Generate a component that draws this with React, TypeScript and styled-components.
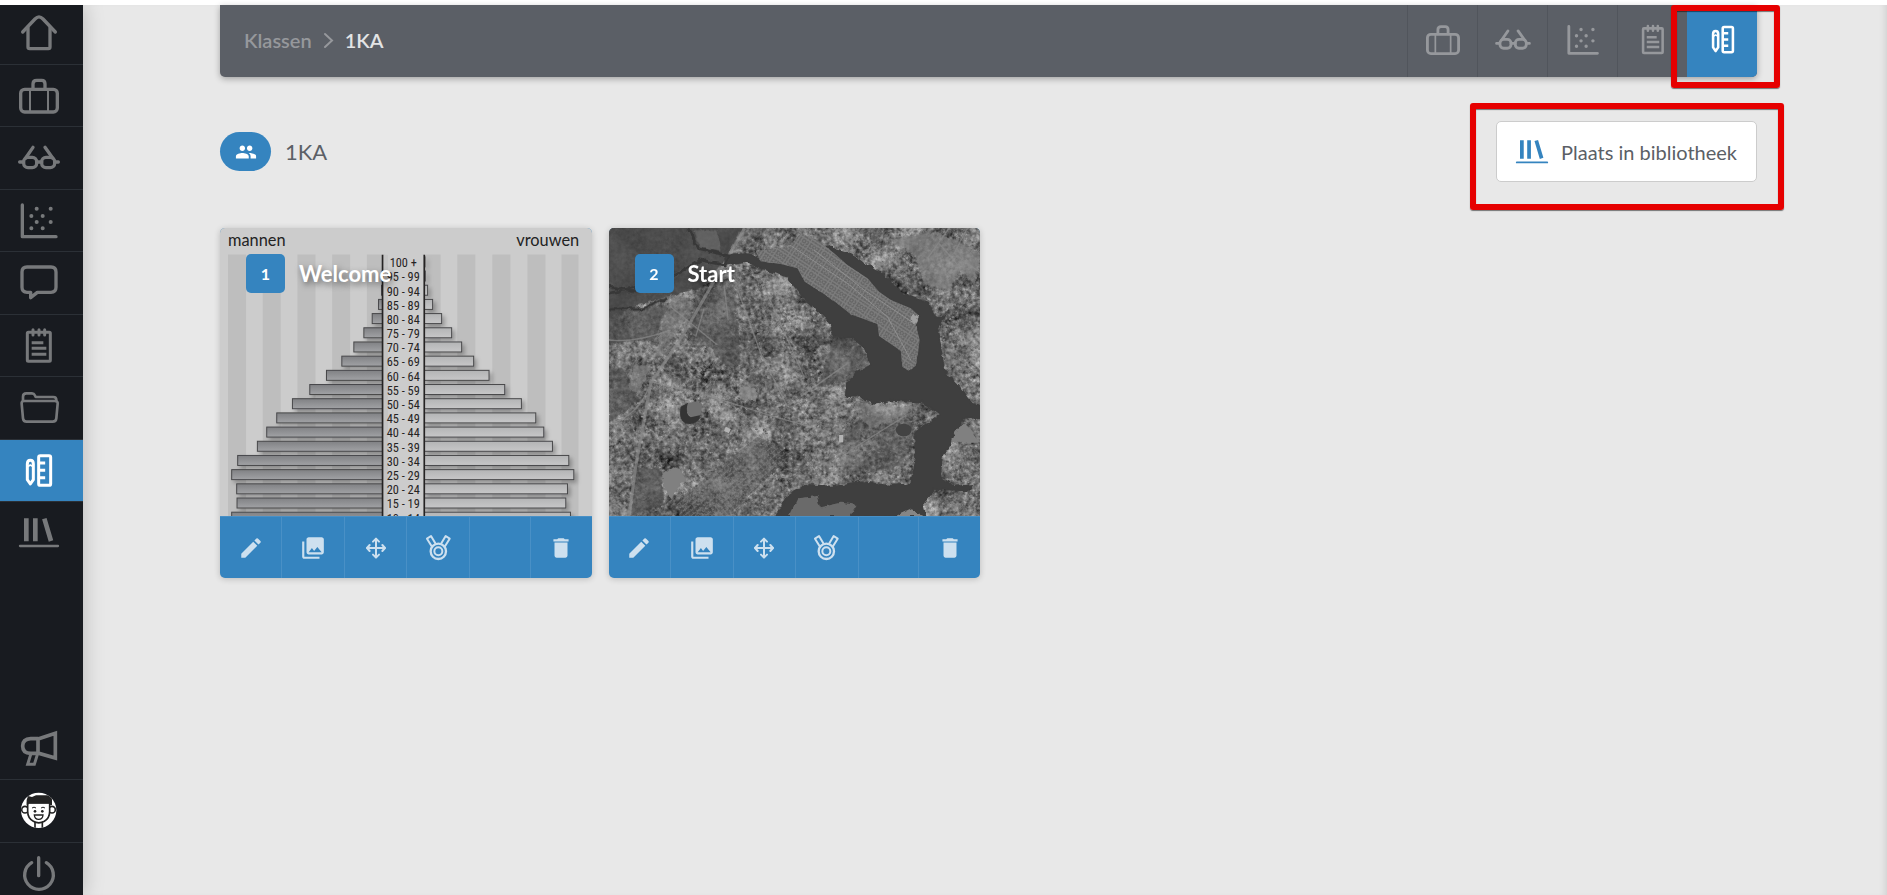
import React from "react";
import styled, { createGlobalStyle, css } from "styled-components";
import { MdEdit, MdCollections, MdDelete, MdPeople } from "react-icons/md";

const colors = {
  page: "#e8e8e8",
  sidebar: "#181b20",
  line: "#2b3036",
  icon: "#77797b",
  blue: "#3584bf",
  bar: "#5b5f66",
  barLine: "#51555c",
  barIcon: "#96989c",
  red: "#e60000",
};

const GlobalStyle = createGlobalStyle`
  *, *::before, *::after { box-sizing: border-box; }
  body {
    margin: 0;
    background: #ffffff;
    font-family: Lato, "Open Sans", sans-serif;
    color: ${colors.bar};
  }
  button { font: inherit; border: 0; padding: 0; cursor: pointer; }
  a { color: inherit; text-decoration: none; }
  ul, ol { list-style: none; margin: 0; padding: 0; }
  h1, h2 { margin: 0; }
`;

/* ---------- Icons ---------- */

type IconProps = { size?: number };

const LineIcon = styled.svg<{ $stroke?: number; $sharp?: boolean }>`
  display: block;
  flex: none;
  overflow: visible;
  fill: none;
  stroke: currentColor;
  stroke-width: ${(p) => p.$stroke ?? 10};
  stroke-linecap: round;
  stroke-linejoin: ${(p) => (p.$sharp ? "miter" : "round")};
`;

const HomeIcon = ({ size = 40 }: IconProps) => (
  <LineIcon width={size} height={size} viewBox="57 38 120 120" aria-hidden="true">
    <path d="M68 95 L105 56 Q117 43 129 56 L166 95" />
    <path d="M84 82 V140 Q84 145 89 145 H145 Q150 145 150 140 V82" />
  </LineIcon>
);

const CaseIcon = ({ size = 40 }: IconProps) => (
  <LineIcon width={size} height={size} viewBox="57 226 120 120" aria-hidden="true">
    <rect x="62" y="266" width="110" height="68" rx="12" />
    <path d="M99 264 V250 Q99 239 110 239 H125 Q135 239 135 250 V264" />
    <path d="M90 268 V332 M144 268 V332" strokeWidth="6" />
  </LineIcon>
);

const GlassesIcon = ({ size = 40 }: IconProps) => (
  <LineIcon width={size} height={size} viewBox="57 414 120 120" aria-hidden="true">
    <rect x="71" y="472" width="39" height="31" rx="13" />
    <rect x="125" y="472" width="39" height="31" rx="13" />
    <path d="M110 486 H125 M59 486 H70 M165 486 H175 M99 442 L77 474 M135 442 L158 474" />
  </LineIcon>
);

const ScatterIcon = ({ size = 40 }: IconProps) => (
  <LineIcon width={size} height={size} viewBox="57 601 120 120" aria-hidden="true">
    <path d="M67 613 V708 H168" />
    <path
      strokeWidth="12"
      d="M110 624h.1 M152 624h.1 M94 646h.1 M128 646h.1 M110 664h.1 M152 664h.1 M94 683h.1 M128 683h.1"
    />
  </LineIcon>
);

const ChatIcon = ({ size = 40 }: IconProps) => (
  <LineIcon width={size} height={size} viewBox="57 789 120 120" aria-hidden="true">
    <path d="M81 801 H153 Q168 801 168 816 V862 Q168 877 153 877 H112 L92 893 V877 H81 Q66 877 66 862 V816 Q66 801 81 801 Z" />
  </LineIcon>
);

const NotesIcon = ({ size = 40 }: IconProps) => (
  <LineIcon width={size} height={size} viewBox="57 138 120 120" $stroke={9} aria-hidden="true">
    <rect x="82" y="157" width="69" height="87" rx="3" />
    <path d="M99 149 V165 M117 149 V165 M134 149 V165" />
    <path d="M95 188 H130 M95 205 H139 M95 223 H139" strokeLinecap="butt" />
  </LineIcon>
);

const FolderIcon = ({ size = 40 }: IconProps) => (
  <LineIcon width={size} height={size} viewBox="57 324 120 120" $stroke={8} aria-hidden="true">
    <path d="M69 362 V350 Q69 340 79 340 H96 Q102 340 104 345 L107 351 H160 Q169 351 169 360 V362" />
    <path d="M65 371 Q64 363 73 363 H164 Q174 363 173 371 L169 415 Q168 425 158 425 H80 Q70 425 69 415 Z" />
  </LineIcon>
);

const ToolsIcon = ({ size = 40 }: IconProps) => (
  <LineIcon width={size} height={size} viewBox="57 513 120 120" $stroke={9} aria-hidden="true">
    <path d="M82 599 V552 Q82 541 91 541 Q100 541 100 552 V599 L91 612 Z" />
    <path d="M83 560 L91 555 L99 560" strokeWidth="5" />
    <rect x="116" y="527" width="36" height="89" rx="5" />
    <path d="M118 549 H131 M118 571 H131 M118 593 H131" strokeLinecap="square" />
  </LineIcon>
);

const LibraryIcon = ({ size = 40 }: IconProps) => (
  <LineIcon width={size} height={size} viewBox="57 700 120 120" aria-hidden="true">
    <path d="M79 716 V785 M106 716 V785 M133 717 L153 784" strokeWidth="14" strokeLinecap="butt" />
    <path d="M60 799 H174" strokeWidth="7" />
  </LineIcon>
);

const MegaphoneIcon = ({ size = 40 }: IconProps) => (
  <LineIcon width={size} height={size} viewBox="57 84 120 120" $stroke={11} $sharp aria-hidden="true">
    <path d="M114 117 L166 100 V174 L114 159 Z" />
    <path d="M114 116 H92 Q68 117 68 138 Q68 160 92 160 H114" />
    <path d="M92 164 L83 193 H103 L112 164" strokeWidth="9" />
  </LineIcon>
);

const PowerIcon = ({ size = 40 }: IconProps) => (
  <LineIcon width={size} height={size} viewBox="57 462 120 120" aria-hidden="true">
    <path d="M95 488 A43 43 0 1 0 139 488 M116 473 V527" />
  </LineIcon>
);

const Avatar = () => (
  <svg width="40" height="40" viewBox="57 273 120 120" role="img" aria-label="Profiel">
    <defs>
      <clipPath id="avatarRound">
        <circle cx="116" cy="331" r="53" />
      </clipPath>
    </defs>
    <g clipPath="url(#avatarRound)">
      <rect x="57" y="273" width="120" height="120" fill="#ffffff" />
      <g fill="#ffffff" stroke="#222222" strokeWidth="5">
        <path d="M105 365 V392 M127 365 V392" />
        <circle cx="75" cy="329" r="10" />
        <circle cx="156" cy="329" r="10" />
        <path d="M83 308 H149 V334 Q149 355 133 364 Q116 373 100 364 Q83 355 83 334 Z" />
      </g>
      <path
        fill="#222222"
        d="M80 315 V300 L84 288 L96 291 L108 286 H146 Q156 287 156 300 V315 H151 L147 311 H86 L84 315 Z"
      />
      <path d="M96 324 Q102 319 108 324 M123 324 Q129 319 135 324" fill="none" stroke="#222222" strokeWidth="3" />
      <circle cx="105" cy="334" r="4" fill="#222222" />
      <circle cx="127" cy="334" r="4" fill="#222222" />
      <path d="M103 345 H129 Q128 358 116 358 Q104 358 103 345 Z" fill="#ffffff" stroke="#222222" strokeWidth="4" />
    </g>
  </svg>
);

const MoveIcon = () => (
  <LineIcon width="20" height="20" viewBox="465 952 60 60" $stroke={6} aria-hidden="true">
    <path d="M495 955 V1009 M469 982 H521" />
    <path d="M486 963 L495 954 L504 963 M486 1002 L495 1011 L504 1002 M476 973 L468 982 L476 991 M514 973 L522 982 L514 991" />
  </LineIcon>
);

const MedalIcon = () => (
  <LineIcon width="25" height="25" viewBox="647 948 75 75" $stroke={6} aria-hidden="true">
    <circle cx="684" cy="997" r="23" strokeWidth="7" />
    <circle cx="684" cy="997" r="12" />
    <path d="M664 982 L650 959 L662 951 L675 973 M704 982 L718 959 L706 951 L693 973" />
  </LineIcon>
);

const Chevron = () => (
  <LineIcon width="9" height="15" viewBox="0 0 9 15" $stroke={2} $sharp aria-hidden="true">
    <path d="M1 1 L8 7.5 L1 14" />
  </LineIcon>
);

/* ---------- Population pyramid cover ---------- */

const Cover = styled.svg`
  display: block;
  width: 100%;
  height: 288px;
`;

const ageGroups: [string, number, number][] = [
  ["100 +", 516, 645],
  ["95 - 99", 515, 646],
  ["90 - 94", 513, 653],
  ["85 - 89", 504, 668],
  ["80 - 84", 485, 695],
  ["75 - 79", 460, 725],
  ["70 - 74", 430, 755],
  ["65 - 69", 394, 791],
  ["60 - 64", 348, 837],
  ["55 - 59", 298, 884],
  ["50 - 54", 246, 934],
  ["45 - 49", 199, 977],
  ["40 - 44", 169, 1001],
  ["35 - 39", 141, 1027],
  ["30 - 34", 82, 1076],
  ["25 - 29", 64, 1091],
  ["20 - 24", 79, 1072],
  ["15 - 19", 80, 1067],
  ["10 - 14", 64, 1081],
];
const leftStripes = [54, 158, 262, 366, 470];
const rightStripes = [637, 741, 846, 951, 1053];

const PyramidCover = () => (
  <Cover viewBox="30 24 1113 864" preserveAspectRatio="xMidYMid slice" role="img" aria-label="Bevolkingspiramide">
    <defs>
      <linearGradient id="men" x1="0" y1="0" x2="0" y2="1">
        <stop offset="0" stopColor="#808184" />
        <stop offset="1" stopColor="#a1a2a5" />
      </linearGradient>
      <linearGradient id="women" x1="0" y1="0" x2="0" y2="1">
        <stop offset="0" stopColor="#b3b4b5" />
        <stop offset="1" stopColor="#c7c7c8" />
      </linearGradient>
      <filter id="barShadow" x="-10%" y="-10%" width="120%" height="120%">
        <feDropShadow dx="8" dy="9" stdDeviation="6" floodColor="#000000" floodOpacity="0.28" />
      </filter>
    </defs>
    <rect x="20" y="14" width="1133" height="884" fill="#cccccc" />
    {[...leftStripes, ...rightStripes].map((x) => (
      <rect key={x} x={x} y="104" width={x === 1053 ? 51 : 54} height="790" fill="#bebebe" />
    ))}
    <g filter="url(#barShadow)">
      {ageGroups.map(([label, left, right], i) => (
        <g key={label} stroke="#48484a" strokeWidth="3">
          <rect x={left + 1} y={111 + i * 42.5} width={518 - left} height="30" fill="url(#men)" />
          <rect x="642" y={111 + i * 42.5} width={right - 643} height="30" fill="url(#women)" />
        </g>
      ))}
    </g>
    <rect x="517" y="105" width="125" height="790" fill="#cccccc" />
    <rect x="519" y="105" width="14" height="790" fill="#bebebe" opacity="0.6" />
    <path d="M517 105 V895 M642 105 V895" stroke="#252323" strokeWidth="5" />
    <g fontFamily='"Roboto Condensed", Roboto, sans-serif' fontSize="37" fill="#252323" textAnchor="middle">
      {ageGroups.map(([label], i) => (
        <text key={label} x="579" y={142 + i * 42.5}>
          {label}
        </text>
      ))}
    </g>
    <g fontFamily="Lato, sans-serif" fontSize="49" fill="#222222">
      <text x="54" y="79">mannen</text>
      <text x="1106" y="79" textAnchor="end">
        vrouwen
      </text>
    </g>
  </Cover>
);

/* ---------- Satellite cover ---------- */

const makeRandom = (seed: number) => () => {
  seed = (seed * 1664525 + 1013904223) % 4294967296;
  return seed / 4294967296;
};

const random = makeRandom(41);
const speckles = Array.from({ length: 3400 }, () => {
  const x = 24 + random() * 1116;
  const y = 24 + random() * 864;
  const tone = Math.round(random() > 0.5 ? 130 + random() * 70 : 45 + random() * 35);
  return { x, y, w: 3 + random() * 6, h: 3 + random() * 4, tone, o: 0.2 + random() * 0.45 };
}).filter(({ x, y }) => x + y > 560 && !(y < 300 && x < 240));

const streetLines = (x: number, y: number, w: number, h: number, step: number) => {
  let d = "";
  for (let i = 0; i < w; i += step) d += `M${x + i} ${y}v${h}`;
  for (let j = 0; j < h; j += step) d += `M${x} ${y + j}h${w}`;
  return d;
};

const lakePath =
  "M370 112 L400 102 L450 104 L480 124 L540 132 L590 145 L612 185 L690 235 L750 283 L830 312 L835 348 L900 392 L905 440 L923 452 L945 437 L957 360 L945 315 L955 288 L930 265 L870 240 L835 215 L800 175 L740 135 L700 100 L675 78 L740 98 L790 130 L850 165 L880 195 L910 225 L985 250 L1000 290 L1030 290 L1010 335 L1020 385 L1032 455 L1075 500 L1110 550 L1145 562 L1145 595 L1090 592 L1060 640 L1045 690 L1025 700 L1018 770 L1060 800 L1115 795 L1100 812 L1000 806 L965 850 L975 892 L524 892 L565 822 L620 795 L700 800 L780 785 L860 797 L930 793 L946 720 L943 640 L1018 585 L960 545 L880 540 L820 549 L770 525 L735 530 L738 490 L765 460 L812 435 L790 380 L760 352 L700 350 L690 312 L650 270 L610 235 L560 170 L500 150 L440 126 L370 135 Z";

const SatelliteCover = () => (
  <Cover viewBox="24 24 1116 864" preserveAspectRatio="xMidYMid slice" role="img" aria-label="Satellietbeeld">
    <defs>
      <filter id="terrain" x="0" y="0" width="100%" height="100%" colorInterpolationFilters="sRGB">
        <feTurbulence type="fractalNoise" baseFrequency="0.08" numOctaves="4" seed="8" result="fine" />
        <feTurbulence type="fractalNoise" baseFrequency="0.012" numOctaves="3" seed="3" result="coarse" />
        <feComposite in="fine" in2="coarse" operator="arithmetic" k2="0.5" k3="0.5" />
        <feColorMatrix values="1.3 0 0 0 -0.2  1.3 0 0 0 -0.2  1.3 0 0 0 -0.2  0 0 0 0 1" />
      </filter>
      <filter id="rough" x="-5%" y="-5%" width="110%" height="110%" colorInterpolationFilters="sRGB">
        <feTurbulence type="fractalNoise" baseFrequency="0.05" numOctaves="2" seed="2" />
        <feDisplacementMap in="SourceGraphic" scale="16" xChannelSelector="R" yChannelSelector="G" />
      </filter>
      <clipPath id="peninsula">
        <path d="M465 92 L560 84 L600 40 L650 60 L700 100 L740 135 L800 175 L835 215 L870 240 L930 265 L955 288 L945 315 L957 360 L945 437 L923 452 L905 440 L900 392 L835 348 L830 312 L750 283 L690 235 L612 185 L590 145 L540 132 L480 124 Z" />
      </clipPath>
      <clipPath id="southCity">
        <path d="M470 650 L555 690 L530 745 L430 840 L380 888 L240 888 L225 845 L320 770 Z" />
      </clipPath>
    </defs>
    <rect x="24" y="24" width="1116" height="864" fill="#686868" />
    <rect x="24" y="24" width="1116" height="864" filter="url(#terrain)" opacity="0.85" />
    {speckles.map((s, i) => (
      <rect
        key={i}
        x={s.x}
        y={s.y}
        width={s.w}
        height={s.h}
        fill={`rgb(${s.tone},${s.tone},${s.tone})`}
        opacity={s.o}
        transform={`rotate(${(i % 3) * 22} ${s.x} ${s.y})`}
      />
    ))}
    <g filter="url(#rough)">
      <path d="M10 10 H430 L385 100 L310 200 L130 250 L10 300 Z" fill="#454545" opacity="0.85" />
      <path d="M10 280 L200 255 L160 360 L10 370 Z" fill="#4c4c4c" opacity="0.6" />
      <path d="M290 205 L400 200 L420 430 L375 440 L320 370 L270 340 Z" fill="#484848" opacity="0.5" />
      <path d="M10 430 L70 450 L120 540 L24 610 Z" fill="#444444" opacity="0.6" />
      <path d="M770 600 L910 580 L945 640 L900 740 L740 760 L700 700 Z" fill="#505050" opacity="0.4" />
      <path d="M700 350 L760 350 L812 435 L740 480 L650 500 Z" fill="#4c4c4c" opacity="0.5" />
      <path d="M100 745 L180 745 L190 850 L90 888 Z" fill="#4a4a4a" opacity="0.6" />
      <path d="M280 30 L350 30 L360 95 L300 85 Z" fill="#777777" opacity="0.5" />
      <path d="M870 60 L1010 35 L1140 100 L1120 190 L1080 150 L1040 210 L970 190 L945 110 Z" fill="#808080" opacity="0.7" />
      <path d="M760 545 L860 560 L950 560 L900 590 L810 625 L770 590 Z" fill="#8c8c8c" opacity="0.5" />
      <path d="M100 430 L150 440 L115 520 L85 505 Z" fill="#868686" opacity="0.6" />
      <path d="M215 225 L290 245 L160 430 L185 310 Z" fill="#7c7c7c" opacity="0.5" />
      <path d="M24 200 L100 215 L200 200 M24 268 L130 265 L200 235" fill="none" stroke="#363636" strokeWidth="8" />
    </g>
    <g fill="none" stroke="#434343" strokeWidth="3" opacity="0.3">
      <path d={streetLines(420, 190, 150, 370, 17)} transform="rotate(-14 480 380)" />
    </g>
    <g clipPath="url(#southCity)">
      <rect x="200" y="620" width="400" height="290" fill="#4a4a4a" opacity="0.45" />
      <path
        d={streetLines(100, 560, 600, 500, 13)}
        stroke="#8a8a8a"
        strokeWidth="3"
        strokeDasharray="7 5"
        opacity="0.5"
        transform="rotate(-38 400 760)"
      />
    </g>
    <g fill="none" stroke="#8c8c8c" strokeWidth="4" opacity="0.65">
      <path d="M432 24 L330 200 L250 340 L150 490 L105 740 L85 888" strokeWidth="9" />
      <path d="M150 485 L330 530 L520 590 L700 640" />
      <path d="M370 195 L382 300 M310 265 L285 350 M400 180 L480 400 L560 560 M490 200 L610 470" />
      <path d="M24 612 Q110 590 145 500 M24 360 Q100 370 210 330" />
      <path d="M210 260 L350 375 M750 690 L910 590 M600 530 L740 430" />
      <path d="M1045 24 L980 115 M1015 70 L1080 145 M1100 24 L1060 100 L1140 160" />
    </g>
    <g filter="url(#rough)">
      <path d={lakePath} fill="#3f3f3f" stroke="#3f3f3f" strokeWidth="5" />
      <path d="M265 24 L290 85 L385 108 L370 135 L300 120 L200 180 L24 220" fill="none" stroke="#383838" strokeWidth="8" />
      <path d="M565 888 L590 835 L650 828 L660 862 L720 848 L770 855 L750 888 Z" fill="#6a6a6a" />
      <path d="M885 888 L930 868 L965 888 Z" fill="#868686" />
    </g>
    <g clipPath="url(#peninsula)">
      <rect x="450" y="24" width="520" height="440" fill="#7c7c7c" />
      <path
        d={streetLines(380, -80, 700, 640, 9)}
        stroke="#5a5a5a"
        strokeWidth="4"
        strokeDasharray="9 4 5 6"
        opacity="0.6"
        transform="rotate(33 700 240)"
      />
      <path d="M560 70 L740 190 L860 290 L930 420 M640 90 L790 210 L940 310" fill="none" stroke="#a0a0a0" strokeWidth="3" opacity="0.6" />
    </g>
    <path d="M240 560 Q230 610 268 612 Q305 605 295 580 L268 590 Q252 580 262 548 Z" fill="#343434" />
    <path d="M262 550 Q285 540 305 552 L300 585 L270 592 Q252 575 262 550Z" fill="#707070" />
    <g filter="url(#rough)">
      <path d="M185 765 Q215 735 240 745 L255 785 Q220 800 217 835 Q185 810 185 765 Z" fill="#808080" />
      <path d="M1050 668 Q1060 620 1095 614 Q1120 640 1138 668 Z" fill="#808080" />
      <path d="M935 280 L952 292 L940 310 L928 300 Z" fill="#a0a0a0" />
      <path d="M418 498 L470 505 L465 545 L415 535 Z" fill="#8f8f8f" opacity="0.7" />
    </g>
    <path d="M375 620 l15 8 -6 12 -14 -8z M715 645 h12 v22 h-12z" fill="#b4b4b4" />
    <ellipse cx="909" cy="630" rx="24" ry="19" fill="#434343" />
  </Cover>
);

/* ---------- Layout ---------- */

const Page = styled.div`
  display: flex;
  height: 100vh;
  padding-top: 5px;
  overflow: hidden;
`;

const Sidebar = styled.nav`
  display: flex;
  flex-direction: column;
  justify-content: space-between;
  flex: none;
  width: 83px;
  overflow: hidden;
  background: ${colors.sidebar};
`;

const SidebarFrame = styled.div`
  display: flex;
  z-index: 1;
  box-shadow: 0 0 20px rgba(0, 0, 0, 0.22);
  clip-path: inset(0 -30px 0 0);
`;

const MainMenu = styled.ul`
  margin-top: -3px;
`;

const AccountMenu = styled.ul`
  margin-bottom: -11px;
`;

const MenuItem = styled.li`
  height: 63px;
  border-bottom: 1px solid ${colors.line};

  &:nth-child(even) {
    height: 62px;
  }
  &:last-child {
    border-bottom-color: transparent;
  }
  ${AccountMenu} & {
    height: 63px;
  }
`;

const MenuLink = styled.a<{ $active?: boolean }>`
  display: flex;
  align-items: center;
  justify-content: center;
  height: 100%;
  padding-right: 5px;
  color: ${(p) => (p.$active ? "#ffffff" : colors.icon)};
  background: ${(p) => (p.$active ? colors.blue : "transparent")};
`;

const Main = styled.main`
  flex: 1;
  min-width: 0;
  padding: 0 130px 0 137px;
  background: ${colors.page};
  box-shadow: inset -6px 0 6px -4px rgba(0, 0, 0, 0.1);
`;

const TopBar = styled.header`
  display: flex;
  justify-content: space-between;
  height: 72px;
  border-radius: 0 0 5px 5px;
  background: ${colors.bar};
  box-shadow: 0 2px 6px rgba(0, 0, 0, 0.3);
`;

const Breadcrumb = styled.ol`
  display: flex;
  align-items: center;
  gap: 12px;
  padding: 0 0 2px 24px;
  font-size: 20px;
  font-weight: 600;
  line-height: 24px;
  color: ${colors.barIcon};
`;

const Crumb = styled.li<{ $current?: boolean }>`
  display: flex;
  align-items: center;
  gap: 12px;
  color: ${(p) => (p.$current ? "#e3e4e5" : "inherit")};
`;

const Tabs = styled.nav`
  display: flex;
`;

const Tab = styled.a<{ $active?: boolean }>`
  position: relative;
  display: flex;
  align-items: center;
  justify-content: center;
  width: 70px;
  padding-bottom: 2px;
  border-left: 1px solid ${colors.barLine};
  color: ${colors.barIcon};
  ${(p) =>
    p.$active &&
    css`
      border-left-color: ${colors.blue};
      border-radius: 0 0 5px 0;
      background: ${colors.blue};
      color: #ffffff;
    `}
`;

const Highlight = styled.span<{ $inset: string }>`
  position: absolute;
  z-index: 2;
  inset: ${(p) => p.$inset};
  border: 6px solid ${colors.red};
  border-radius: 3px;
  box-shadow: 0 1px 1px rgba(0, 0, 0, 0.5), inset 0 1px 1px rgba(0, 0, 0, 0.5);
  pointer-events: none;
`;

const Heading = styled.div`
  display: flex;
  align-items: center;
  justify-content: space-between;
  margin: 44px 0 46px;
`;

const ClassName = styled.div`
  display: flex;
  align-items: center;
  gap: 14px;
`;

const Pill = styled.span`
  display: flex;
  align-items: center;
  justify-content: center;
  width: 51px;
  height: 39px;
  border-radius: 20px;
  background: ${colors.blue};
  color: #ffffff;
`;

const Title = styled.h1`
  font-size: 22px;
  font-weight: 400;
  line-height: 28px;
`;

const LibraryButton = styled.button`
  position: relative;
  display: flex;
  align-items: center;
  gap: 13px;
  height: 61px;
  padding: 0 19px;
  border: 1px solid #cccccc;
  border-radius: 5px;
  background: #ffffff;
  font-size: 20px;
  color: ${colors.bar};

  svg {
    color: ${colors.blue};
  }
`;

const Cards = styled.section`
  display: grid;
  grid-template-columns: repeat(4, 1fr);
  gap: 17px;
`;

const CardBox = styled.article`
  position: relative;
  overflow: hidden;
  border-radius: 5px;
  background: ${colors.blue};
  box-shadow: 0 1px 6px rgba(0, 0, 0, 0.2);
`;

const CardCaption = styled.div`
  position: absolute;
  top: 26px;
  left: 26px;
  display: flex;
  align-items: center;
  gap: 14px;
`;

const CardNumber = styled.span`
  display: flex;
  align-items: center;
  justify-content: center;
  width: 39px;
  height: 39px;
  border-radius: 5px;
  background: ${colors.blue};
  color: #ffffff;
  font-size: 16px;
  font-weight: 700;
`;

const CardTitle = styled.h2`
  font-size: 22px;
  font-weight: 700;
  line-height: 28px;
  color: #ffffff;
  text-shadow: 2px 3px 6px rgba(0, 0, 0, 0.5);
`;

const CardActions = styled.div`
  display: flex;
  height: 62px;
  border-top: 1px solid #4990c6;
`;

const Action = styled.button<{ $last?: boolean }>`
  display: flex;
  align-items: center;
  justify-content: center;
  width: 62px;
  background: transparent;
  color: #cde0ef;
  border-right: 1px solid #4990c6;

  &:nth-child(even) {
    width: 63px;
  }
  ${(p) =>
    p.$last &&
    css`
      margin-left: auto;
      border-right: 0;
      border-left: 1px solid #4990c6;
    `}
`;

type CardProps = { number: number; title: string; cover: React.ReactNode };

const LessonCard = ({ number, title, cover }: CardProps) => (
  <CardBox>
    {cover}
    <CardCaption>
      <CardNumber>{number}</CardNumber>
      <CardTitle>{title}</CardTitle>
    </CardCaption>
    <CardActions>
      <Action aria-label="Bewerken"><MdEdit size={26} /></Action>
      <Action aria-label="Afbeelding"><MdCollections size={26} /></Action>
      <Action aria-label="Verplaatsen"><MoveIcon /></Action>
      <Action aria-label="Medaille"><MedalIcon /></Action>
      <Action $last aria-label="Verwijderen"><MdDelete size={26} /></Action>
    </CardActions>
  </CardBox>
);

const mainMenu = [
  { label: "Start", icon: <HomeIcon /> },
  { label: "Koffer", icon: <CaseIcon /> },
  { label: "Bril", icon: <GlassesIcon /> },
  { label: "Resultaten", icon: <ScatterIcon /> },
  { label: "Berichten", icon: <ChatIcon /> },
  { label: "Notities", icon: <NotesIcon /> },
  { label: "Mappen", icon: <FolderIcon /> },
  { label: "Klassen", icon: <ToolsIcon />, active: true },
  { label: "Bibliotheek", icon: <LibraryIcon /> },
];

const accountMenu = [
  { label: "Nieuws", icon: <MegaphoneIcon /> },
  { label: "Profiel", icon: <Avatar /> },
  { label: "Afmelden", icon: <PowerIcon /> },
];

export default function App() {
  return (
    <>
      <GlobalStyle />
      <Page>
        <SidebarFrame>
          <Sidebar aria-label="Hoofdmenu">
            <MainMenu>
              {mainMenu.map((item) => (
                <MenuItem key={item.label}>
                  <MenuLink href="#" aria-label={item.label} $active={item.active}>
                    {item.icon}
                  </MenuLink>
                </MenuItem>
              ))}
            </MainMenu>
            <AccountMenu>
              {accountMenu.map((item) => (
                <MenuItem key={item.label}>
                  <MenuLink href="#" aria-label={item.label}>
                    {item.icon}
                  </MenuLink>
                </MenuItem>
              ))}
            </AccountMenu>
          </Sidebar>
        </SidebarFrame>
        <Main>
          <TopBar>
            <Breadcrumb>
              <Crumb>
                <a href="#">Klassen</a>
                <Chevron />
              </Crumb>
              <Crumb $current>1KA</Crumb>
            </Breadcrumb>
            <Tabs aria-label="Klasmenu">
              <Tab href="#" aria-label="Koffer"><CaseIcon size={34} /></Tab>
              <Tab href="#" aria-label="Bril"><GlassesIcon size={34} /></Tab>
              <Tab href="#" aria-label="Resultaten"><ScatterIcon size={34} /></Tab>
              <Tab href="#" aria-label="Notities"><NotesIcon size={34} /></Tab>
              <Tab href="#" aria-label="Lesmateriaal" $active>
                <ToolsIcon size={34} />
                <Highlight $inset="0 -23px -11px -17px" />
              </Tab>
            </Tabs>
          </TopBar>
          <Heading>
            <ClassName>
              <Pill><MdPeople size={22} /></Pill>
              <Title>1KA</Title>
            </ClassName>
            <LibraryButton>
              <LibraryIcon size={32} />
              Plaats in bibliotheek
              <Highlight $inset="-19px -28px -29px -27px" />
            </LibraryButton>
          </Heading>
          <Cards>
            <LessonCard number={1} title="Welcome" cover={<PyramidCover />} />
            <LessonCard number={2} title="Start" cover={<SatelliteCover />} />
          </Cards>
        </Main>
      </Page>
    </>
  );
}
